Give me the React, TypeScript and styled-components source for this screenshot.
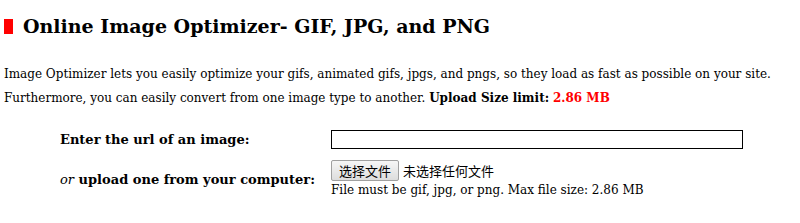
import { createGlobalStyle, styled } from 'styled-components';

const GlobalStyle = createGlobalStyle`
  html, body {
    margin: 0;
    padding: 0;
    background: #ffffff;
  }
  body {
    font-family: 'DejaVu Serif', Georgia, serif;
    color: #000000;
  }
`;

const MAX_SIZE = '2.86 MB';

export default function App() {
  return (
    <>
      <GlobalStyle />
      <Page>
        <Title>
          <Marker />
          Online Image Optimizer- GIF, JPG, and PNG
        </Title>
        <Intro>
          Image Optimizer lets you easily optimize your gifs, animated gifs, jpgs, and pngs, so they
          load as fast as possible on your site. Furthermore, you can easily convert from one image
          type to another. <Strong>Upload Size limit:</Strong> <Limit>{MAX_SIZE}</Limit>
        </Intro>
        <FormTable>
          <tbody>
            <tr>
              <LabelCell>Enter the url of an image:</LabelCell>
              <FieldCell>
                <UrlInput type="text" />
              </FieldCell>
            </tr>
            <tr>
              <LabelCell>
                <em>or</em> upload one from your computer:
              </LabelCell>
              <FieldCell>
                <FileRow>
                  <FileButton type="button">选择文件</FileButton>
                  <FileStatus>未选择任何文件</FileStatus>
                </FileRow>
                <Hint>File must be gif, jpg, or png. Max file size: {MAX_SIZE}</Hint>
              </FieldCell>
            </tr>
          </tbody>
        </FormTable>
      </Page>
    </>
  );
}

const Page = styled.div`
  padding: 0 4px;
`;

const Title = styled.h1`
  display: flex;
  align-items: center;
  gap: 10px;
  margin: 0;
  padding-top: 14px;
  font-size: 19px;
  font-weight: 700;
  line-height: 24px;
`;

const Marker = styled.span`
  flex: none;
  width: 9px;
  height: 15px;
  background: #ff0000;
`;

const Intro = styled.p`
  margin: 24px 0 0;
  font-size: 12px;
  line-height: 24px;
`;

const Strong = styled.strong`
  font-weight: 700;
`;

const Limit = styled.strong`
  font-weight: 700;
  color: #ff0000;
`;

const FormTable = styled.table`
  margin: 9px 0 0 56px;
  border-collapse: collapse;
`;

const LabelCell = styled.td`
  width: 271px;
  padding: 0;
  font-size: 13px;
  font-weight: 700;
  vertical-align: middle;
  height: 40px;

  em {
    font-weight: 400;
  }
`;

const FieldCell = styled.td`
  padding: 0;
  vertical-align: middle;
`;

const UrlInput = styled.input`
  display: block;
  box-sizing: border-box;
  width: 412px;
  height: 19px;
  margin: 0;
  border: 1px solid #000000;
  padding: 0 2px;
`;

const FileRow = styled.div`
  display: flex;
  align-items: center;
  gap: 4px;
`;

const FileButton = styled.button`
  box-sizing: border-box;
  width: 68px;
  height: 21px;
  padding: 0;
  border: 1px solid #a0a0a0;
  border-radius: 2px;
  background: linear-gradient(#f6f6f6, #dddddd);
  font-family: 'Noto Sans CJK SC', sans-serif;
  font-size: 13px;
  line-height: 19px;
  color: #000000;
`;

const FileStatus = styled.span`
  font-family: 'Noto Sans CJK SC', sans-serif;
  font-size: 13px;
`;

const Hint = styled.div`
  margin-top: 1px;
  font-size: 12px;
  line-height: 16px;
`;
